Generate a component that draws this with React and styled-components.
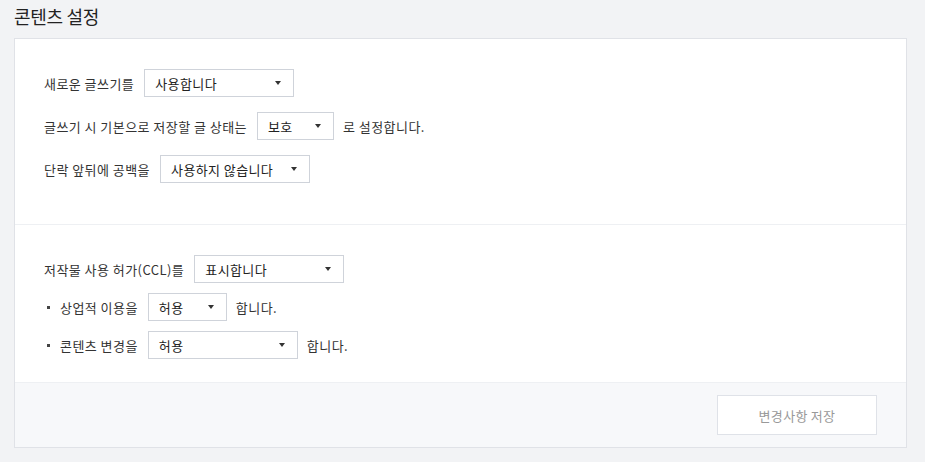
import React from 'react'
import styled, { createGlobalStyle } from 'styled-components'

const Global = createGlobalStyle`
  html, body { margin: 0; padding: 0; background: #f2f3f5; }
  body { font-family: "Noto Sans CJK KR", "Noto Sans", sans-serif; color: #333; }
`

const Page = styled.div`
  padding: 0 18px 15px 14px;
`

const Title = styled.h2`
  margin: 0;
  height: 38px;
  line-height: 32px;
  font-size: 18px;
  font-weight: 400;
  color: #222;
  letter-spacing: -0.3px;
`

const Card = styled.div`
  background: #fff;
  border: 1px solid #e0e2e7;
`

const Section = styled.div`
  display: flex;
  flex-direction: column;
  gap: ${p => p.gap}px;
  padding: ${p => p.pt}px 29px ${p => p.pb}px;
  border-bottom: 1px solid #eef0f3;
`

const Row = styled.div`
  display: flex;
  align-items: center;
  gap: 10px;
  font-size: 13px;
  letter-spacing: 0.45px;
  color: #333;
  height: 28px;
`

const Tail = styled.span`
  margin-left: -1px;
`

const Bullet = styled.span`
  width: 3px;
  height: 3px;
  background: #444;
  margin-left: 3px;
`

const Select = styled.div`
  box-sizing: border-box;
  width: ${p => p.w}px;
  height: 28px;
  border: 1px solid #cfd3da;
  display: flex;
  align-items: center;
  justify-content: space-between;
  padding: 0 12px 0 10px;
  font-size: 13px;
  letter-spacing: 0.4px;
  color: #222;
  background: #fff;
`

const Caret = styled.span`
  width: 0;
  height: 0;
  border-left: 3.5px solid transparent;
  border-right: 3.5px solid transparent;
  border-top: 4px solid #333;
`

const Footer = styled.div`
  background: #f7f8fa;
  display: flex;
  justify-content: flex-end;
  padding: 12px 29px 12px;
`

const SaveButton = styled.button`
  width: 160px;
  height: 40px;
  border: 1px solid #dfe2e8;
  background: #fff;
  color: #999;
  font-family: inherit;
  font-size: 13px;
  letter-spacing: 0.3px;
`

const Drop = ({ w, children }) => (
  <Select w={w}>
    <span>{children}</span>
    <Caret />
  </Select>
)

export default function App() {
  return (
    <Page>
      <Global />
      <Title>콘텐츠 설정</Title>
      <Card>
        <Section pt={30} pb={41} gap={15}>
          <Row><span>새로운 글쓰기를</span><Drop w={150}>사용합니다</Drop></Row>
          <Row><span>글쓰기 시 기본으로 저장할 글 상태는</span><Drop w={77}>보호</Drop><Tail>로 설정합니다.</Tail></Row>
          <Row><span>단락 앞뒤에 공백을</span><Drop w={150}>사용하지 않습니다</Drop></Row>
        </Section>
        <Section pt={30} pb={23} gap={10}>
          <Row><span>저작물 사용 허가(CCL)를</span><Drop w={150}>표시합니다</Drop></Row>
          <Row><Bullet /><span>상업적 이용을</span><Drop w={79}>허용</Drop><Tail>합니다.</Tail></Row>
          <Row><Bullet /><span>콘텐츠 변경을</span><Drop w={150}>허용</Drop><Tail>합니다.</Tail></Row>
        </Section>
        <Footer>
          <SaveButton>변경사항 저장</SaveButton>
        </Footer>
      </Card>
    </Page>
  )
}
